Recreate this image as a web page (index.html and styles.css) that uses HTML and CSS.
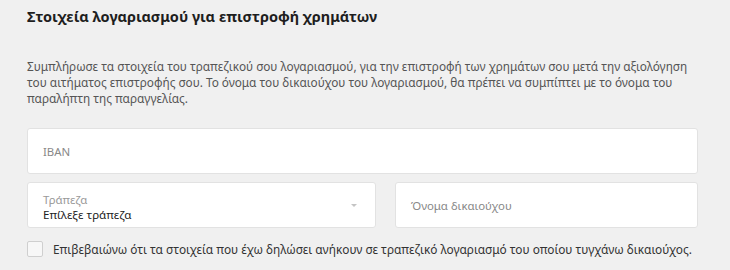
FILE: index.html
```html
<!DOCTYPE html>
<html lang="el">
<head>
<meta charset="utf-8">
<link rel="stylesheet" href="styles.css">
</head>
<body>
<section class="refund">
  <h2 class="title">Στοιχεία λογαριασμού για επιστροφή χρημάτων</h2>
  <p class="desc">Συμπλήρωσε τα στοιχεία του τραπεζικού σου λογαριασμού, για την επιστροφή των χρημάτων σου μετά την αξιολόγηση του αιτήματος επιστροφής σου. Το όνομα του δικαιούχου του λογαριασμού, θα πρέπει να συμπίπτει με το όνομα του παραλήπτη της παραγγελίας.</p>
  <div class="field field-full"><span class="placeholder">IBAN</span></div>
  <div class="row">
    <div class="field field-select">
      <div class="select-text">
        <span class="label">Τράπεζα</span>
        <span class="value">Επίλεξε τράπεζα</span>
      </div>
      <span class="caret"></span>
    </div>
    <div class="field field-name"><span class="placeholder">Όνομα δικαιούχου</span></div>
  </div>
  <label class="confirm">
    <span class="checkbox"></span>
    <span class="confirm-text">Επιβεβαιώνω ότι τα στοιχεία που έχω δηλώσει ανήκουν σε τραπεζικό λογαριασμό του οποίου τυγχάνω δικαιούχος.</span>
  </label>
</section>
</body>
</html>
```
FILE: styles.css
```css
html, body {
  margin: 0;
  padding: 0;
  background: #f0f0f0;
}
body {
  font-family: "Noto Sans", "Liberation Sans", sans-serif;
  color: #333;
}
.refund {
  padding: 0 32px 0 27px;
  width: 671px;
}
.title {
  margin: 0;
  padding-top: 5px;
  font-size: 14.5px;
  line-height: 22px;
  font-weight: 700;
  color: #1e1e1e;
}
.desc {
  margin: 31px 0 0;
  font-size: 11.8px;
  line-height: 16px;
  color: #555;
}
.field {
  box-sizing: border-box;
  background: #fff;
  border: 1px solid #e2e2e2;
  border-radius: 3px;
  height: 46px;
  display: flex;
  align-items: center;
  padding: 0 15px;
}
.field-full {
  margin-top: 22px;
}
.placeholder {
  font-size: 11.4px;
  color: #888;
}
.row {
  display: flex;
  gap: 19px;
  margin-top: 8px;
}
.field-select {
  width: 349px;
  justify-content: space-between;
}
.field-name {
  flex: 1;
}
.select-text {
  display: flex;
  flex-direction: column;
  padding-top: 4px;
}
.label {
  font-size: 11.4px;
  line-height: 15px;
  color: #999;
}
.value {
  font-size: 11.6px;
  line-height: 16px;
  color: #222;
}
.caret {
  width: 0;
  height: 0;
  border-left: 3px solid transparent;
  border-right: 3px solid transparent;
  border-top: 3px solid #c4c4c4;
  margin-right: 3px;
}
.confirm {
  display: flex;
  align-items: center;
  gap: 10px;
  margin-top: 13px;
}
.checkbox {
  box-sizing: border-box;
  width: 16px;
  height: 16px;
  border: 1px solid #cfcfcf;
  border-radius: 2px;
  background: #f7f7f7;
}
.confirm-text {
  font-size: 11.85px;
  color: #333;
}
```
